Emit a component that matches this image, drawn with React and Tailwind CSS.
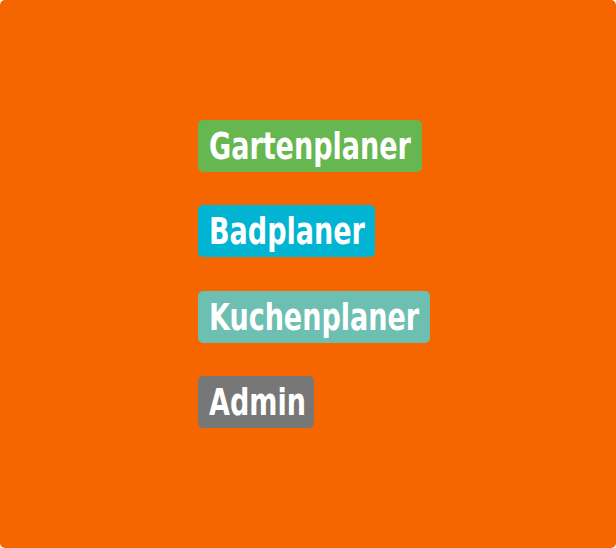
export default function App() {
  const items = [
    { label: "Gartenplaner", bg: "bg-[#66b74f]", w: "w-[224px]" },
    { label: "Badplaner", bg: "bg-[#00b4d2]", w: "w-[177px]" },
    { label: "Kuchenplaner", bg: "bg-[#6dbfb1]", w: "w-[232px]" },
    { label: "Admin", bg: "bg-[#777777]", w: "w-[116px]" },
  ];
  return (
    <div className="w-[616px] h-[548px] bg-white">
      <div className="w-full h-full rounded-[5px] bg-[#f56600] flex flex-col justify-center items-start pl-[198px] gap-[33.3px]">
        {items.map((it) => (
          <a
            key={it.label}
            href="#"
            className={`${it.bg} ${it.w} rounded-[5px] h-[52px] pl-[11px] flex items-center overflow-hidden text-white font-bold text-[38px] leading-none whitespace-nowrap [font-family:'DejaVu_Sans_Condensed','DejaVu_Sans',sans-serif]`}
          >
            <span className="inline-block origin-left scale-x-[0.79]">{it.label}</span>
          </a>
        ))}
      </div>
    </div>
  );
}
